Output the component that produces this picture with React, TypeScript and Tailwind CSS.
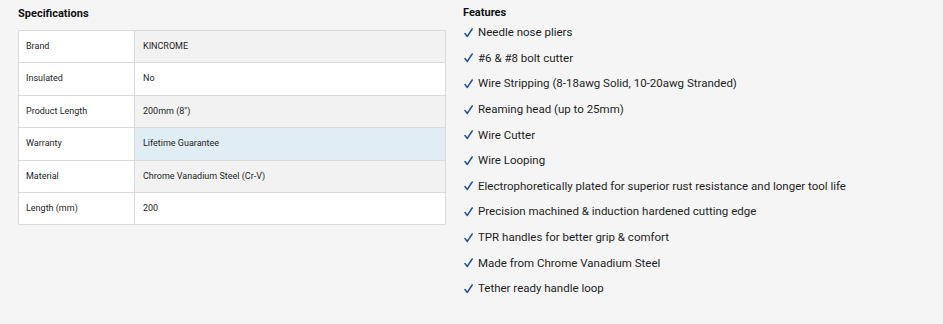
const specs: { label: string; value: string }[] = [
  { label: 'Brand', value: 'KINCROME' },
  { label: 'Insulated', value: 'No' },
  { label: 'Product Length', value: '200mm (8")' },
  { label: 'Warranty', value: 'Lifetime Guarantee' },
  { label: 'Material', value: 'Chrome Vanadium Steel (Cr-V)' },
  { label: 'Length (mm)', value: '200' },
];

const features = [
  'Needle nose pliers',
  '#6 & #8 bolt cutter',
  'Wire Stripping (8-18awg Solid, 10-20awg Stranded)',
  'Reaming head (up to 25mm)',
  'Wire Cutter',
  'Wire Looping',
  'Electrophoretically plated for superior rust resistance and longer tool life',
  'Precision machined & induction hardened cutting edge',
  'TPR handles for better grip & comfort',
  'Made from Chrome Vanadium Steel',
  'Tether ready handle loop',
];

// value cells alternate grey/white, the warranty row is highlighted
function valueBg(i: number) {
  if (i === 3) return 'bg-[#e1edf4]';
  return i % 2 === 0 ? 'bg-[#f2f2f2]' : 'bg-white';
}

function Tick() {
  return (
    <svg width="9" height="10" viewBox="0 0 9 10" className="mr-[5px] ml-[1px] shrink-0">
      <path d="M1 5.6 L3.3 8.4 L8.2 1" fill="none" stroke="#1f4f95" strokeWidth="1.5" strokeLinecap="round" strokeLinejoin="round" />
    </svg>
  );
}

export default function App() {
  return (
    <div className="w-[943px] h-[324px] bg-[#f5f5f5] font-['Roboto',sans-serif] text-[#1e1e1e] flex">
      <section className="w-[428px] ml-[18px] mt-[7px]">
        <h3 className="text-[11px] font-bold leading-[14px] text-[#111]">Specifications</h3>
        <table className="mt-[9px] w-full border-collapse border border-[#dadada] text-[9px]">
          <tbody>
            {specs.map((s, i) => (
              <tr key={s.label} className="h-[32.4px]">
                <td className="w-[116px] bg-white border border-[#dadada] pl-[7px] align-middle">{s.label}</td>
                <td className={`${valueBg(i)} border border-[#dadada] pl-[8px] align-middle`}>{s.value}</td>
              </tr>
            ))}
          </tbody>
        </table>
      </section>
      <section className="ml-[17px] mt-[6px]">
        <h3 className="text-[11px] font-bold leading-[14px] text-[#111]">Features</h3>
        <ul className="flex flex-col">
          {features.map((f) => (
            <li key={f} className="flex items-center h-[25.6px] text-[11.5px]">
              <Tick />
              <span>{f}</span>
            </li>
          ))}
        </ul>
      </section>
    </div>
  );
}
